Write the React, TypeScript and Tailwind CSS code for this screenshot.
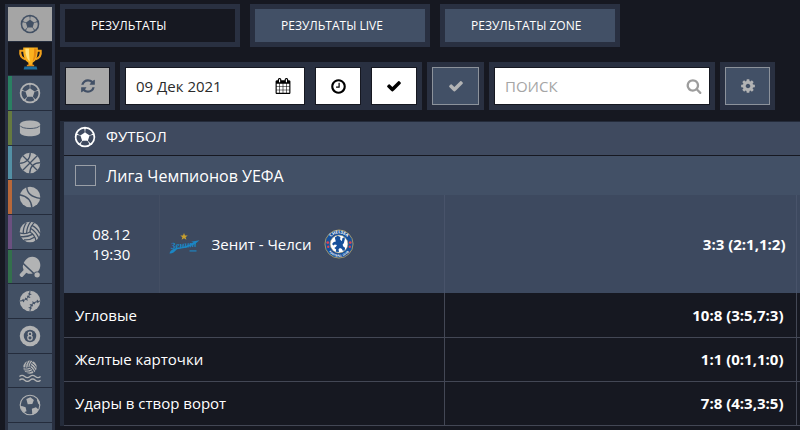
import type { ReactNode } from "react";

const fa = {
  refresh:
    "M1639 1056q0 5-1 7-64 268-268 434.5t-478 166.5q-146 0-282.5-55t-243.5-157l-129 129q-19 19-45 19t-45-19-19-45v-448q0-26 19-45t45-19h448q26 0 45 19t19 45-19 45l-137 137q71 66 161 102t187 36q134 0 250-65t186-179q11-17 53-117 8-23 30-23h192q13 0 22.5 9.5t9.5 22.5zm25-800v448q0 26-19 45t-45 19h-448q-26 0-45-19t-19-45 19-45l138-138q-148-137-349-137-134 0-250 65t-186 179q-11 17-53 117-8 23-30 23h-199q-13 0-22.5-9.5t-9.5-22.5v-7q65-268 270-434.5t480-166.5q146 0 284 55.5t245 156.5l130-129q19-19 45-19t45 19 19 45z",
  calendar:
    "M192 1664h288v-288h-288v288zm352 0h320v-288h-320v288zm-352-352h288v-320h-288v320zm352 0h320v-320h-320v320zm-352-384h288v-288h-288v288zm736 736h320v-288h-320v288zm-384-736h320v-288h-320v288zm768 736h288v-288h-288v288zm-384-352h320v-320h-320v320zm-352-864v-288q0-13-9.5-22.5t-22.5-9.5h-64q-13 0-22.5 9.5t-9.5 22.5v288q0 13 9.5 22.5t22.5 9.5h64q13 0 22.5-9.5t9.5-22.5zm736 864h288v-320h-288v320zm-384-384h320v-288h-320v288zm384 0h288v-288h-288v288zm32-480v-288q0-13-9.5-22.5t-22.5-9.5h-64q-13 0-22.5 9.5t-9.5 22.5v288q0 13 9.5 22.5t22.5 9.5h64q13 0 22.5-9.5t9.5-22.5zm384-64v1280q0 52-38 90t-90 38h-1408q-52 0-90-38t-38-90v-1280q0-52 38-90t90-38h128v-96q0-66 47-113t113-47h64q66 0 113 47t47 113v96h384v-96q0-66 47-113t113-47h64q66 0 113 47t47 113v96h128q52 0 90 38t38 90z",
  clock:
    "M1024 544v448q0 14-9 23t-23 9h-320q-14 0-23-9t-9-23v-64q0-14 9-23t23-9h224v-352q0-14 9-23t23-9h64q14 0 23 9t9 23zm416 352q0-148-73-273t-198-198-273-73-273 73-198 198-73 273 73 273 198 198 273 73 273-73 198-198 73-273zm224 0q0 209-103 385.5t-279.5 279.5-385.5 103-385.5-103-279.5-279.5-103-385.5 103-385.5 279.5-279.5 385.5-103 385.5 103 279.5 279.5 103 385.5z",
  check:
    "M1671 566q0 40-28 68l-724 724-136 136q-28 28-68 28t-68-28l-136-136-362-362q-28-28-28-68t28-68l136-136q28-28 68-28t68 28l294 295 656-657q28-28 68-28t68 28l136 136q28 28 28 68z",
  search:
    "M1216 832q0-185-131.5-316.5t-316.5-131.5-316.5 131.5-131.5 316.5 131.5 316.5 316.5 131.5 316.5-131.5 131.5-316.5zm512 832q0 52-38 90t-90 38q-54 0-90-38l-343-342q-179 124-399 124-143 0-273.5-55.5t-225-150-150-225-55.5-273.5 55.5-273.5 150-225 225-150 273.5-55.5 273.5 55.5 225 150 150 225 55.5 273.5q0 220-124 399l343 343q37 37 37 90z",
  cog: "M1152 896q0-106-75-181t-181-75-181 75-75 181 75 181 181 75 181-75 75-181zm512-109v222q0 12-8 23t-20 13l-185 28q-19 54-39 91 35 50 107 138 10 12 10 25t-9 23q-27 37-99 108t-94 71q-12 0-26-9l-138-108q-44 23-91 38-16 136-29 186-7 28-36 28h-222q-14 0-24.5-8.5t-11.5-21.5l-28-184q-49-16-90-37l-141 107q-10 9-25 9-14 0-25-11-126-114-165-168-7-10-7-23 0-12 8-23 15-21 51-66.5t54-70.5q-27-50-41-99l-183-27q-13-2-21-12.5t-8-23.5v-222q0-12 8-23t19-13l186-28q14-46 39-92-40-57-107-138-10-12-10-24 0-10 9-23 26-36 98.5-107.5t94.5-71.5q13 0 26 10l138 107q44-23 91-38 16-136 29-186 7-28 36-28h222q14 0 24.5 8.5t11.5 21.5l28 184q49 16 90 37l142-107q9-9 24-9 13 0 25 10 129 119 165 170 7 8 7 22 0 12-8 23-15 21-51 66.5t-54 70.5q26 50 41 98l183 28q13 2 21 12.5t8 23.5z",
};

function Icon({ path, className }: { path: string; className: string }) {
  return (
    <svg viewBox="0 0 1792 1792" fill="currentColor" className={className} aria-hidden="true">
      <path d={path} />
    </svg>
  );
}

function Glyph({ children, className = "size-[22px]" }: { children: ReactNode; className?: string }) {
  return (
    <svg viewBox="0 0 24 24" className={className} fill="currentColor" aria-hidden="true">
      {children}
    </svg>
  );
}

function SoccerBall({ cut, className }: { cut: string; className?: string }) {
  return (
    <Glyph className={className}>
      <circle cx="12" cy="12" r="11.2" />
      {[0, 72, 144, 216, 288].map((angle) => (
        <path
          key={angle}
          d="M9.7 16.2h4.6q.6 0 .9.6l1.4 2.5q.2.5-.3.8-4.3 2.4-8.6 0-.5-.3-.3-.8l1.4-2.500q.3-.6.9-.6z"
          fill={cut}
          transform={`rotate(${angle} 12 12)`}
        />
      ))}
    </Glyph>
  );
}

const cut = "#425064";

function VolleyballShape() {
  return (
    <>
      <circle cx="12" cy="12" r="11.2" />
      {[0, 120, 240].map((angle) => (
        <path
          key={angle}
          d="M12 12q0-6 5-10.5M8.3 13.7q0-7 4.5-13.1M4.7 13.9q-.5-6.5 3.3-12"
          fill="none"
          stroke={cut}
          strokeWidth="1.4"
          transform={`rotate(${angle} 12 12)`}
        />
      ))}
    </>
  );
}

const sports = [
  { name: "Все", bar: "border-[#a5a5a5]", bg: "bg-[#a5a5a5] text-[#425064]", icon: <SoccerBall cut="#a5a5a5" className="size-[20px]" /> },
  {
    name: "Турниры",
    bar: "border-[#161821]",
    bg: "bg-[#161821]",
    icon: (
      <Glyph className="size-[25px]">
        <path d="M6 4.5H2.2q-1 6.5 5.3 8.5M18 4.5h3.8q1 6.5-5.3 8.5" fill="none" stroke="#f0a01c" strokeWidth="2" />
        <path d="M5 1.5h14q.6 11.7-5 14.5v2.5h-4V16Q4.4 13.2 5 1.5z" fill="#fbb21e" />
        <path d="M7 2.5h3.5q0 8.5 1 12.5-4.5-3-4.5-12.5z" fill="#ffe07a" />
        <path d="M15.5 2.5h2.500q0 9.500-4 12.500 1.700-5 1.500-12.500z" fill="#e58a12" />
        <path d="M8.5 18h7v1.6h-7z" fill="#e58a12" />
        <path d="M6.2 19.6h11.600l.8 3H5.4z" fill="#1d6c9c" />
      </Glyph>
    ),
  },
  { name: "Футбол", bar: "border-[#2a8062]", bg: "bg-[#425064] text-[#b2b3b4]", icon: <SoccerBall cut={cut} className="size-[22px]" /> },
  {
    name: "Хоккей",
    bar: "border-[#657a40]",
    bg: "bg-[#425064] text-[#b2b3b4]",
    icon: (
      <Glyph>
        <path d="M1 8v8.5c0 6 22 6 22 0V8z" />
        <ellipse cx="12" cy="8" rx="11" ry="4.2" />
        <path d="M1.2 9.4c1.8 4.2 19.8 4.2 21.6 0" fill="none" stroke={cut} strokeWidth="1" />
      </Glyph>
    ),
  },
  {
    name: "Баскетбол",
    bar: "border-[#5390a5]",
    bg: "bg-[#425064] text-[#b2b3b4]",
    icon: (
      <Glyph>
        <circle cx="12" cy="12" r="11.2" />
        <path
          d="M12 .5v23M.5 12h23M4 3.5q8 8.5 0 17M20 3.5q-8 8.5 0 17"
          fill="none"
          stroke={cut}
          strokeWidth="1.4"
          transform="rotate(45 12 12)"
        />
      </Glyph>
    ),
  },
  {
    name: "Теннис",
    bar: "border-[#b8683a]",
    bg: "bg-[#425064] text-[#b2b3b4]",
    icon: (
      <Glyph>
        <circle cx="12" cy="12" r="11.2" />
        <path d="M8.5.5q0 11 15 13M.5 9.5q13 2.5 13.5 14" fill="none" stroke={cut} strokeWidth="1.5" />
      </Glyph>
    ),
  },
  {
    name: "Волейбол",
    bar: "border-[#6b5080]",
    bg: "bg-[#425064] text-[#b2b3b4]",
    icon: (
      <Glyph>
        <VolleyballShape />
      </Glyph>
    ),
  },
  {
    name: "Настольный теннис",
    bar: "border-[#33704c]",
    bg: "bg-[#425064] text-[#b2b3b4]",
    icon: (
      <Glyph>
        <path d="M7 4.5C11-.5 18-.2 21.3 4c3 4.2 2.4 9.500-.8 13q-2.5-.5-4 1.3L5.2 7.6Q5.6 6 7 4.5z" />
        <path d="M4.5 9.2L15 19q-3.5 1.3-7-.8L4 22.5q-1 .8-2 0l-1-1q-.8-1 0-2l4-4.3q-1.6-3-.5-6z" />
        <circle cx="19.8" cy="20.5" r="2.9" />
      </Glyph>
    ),
  },
  {
    name: "Бейсбол",
    bar: "border-[#425064]",
    bg: "bg-[#425064] text-[#b2b3b4]",
    icon: (
      <Glyph>
        <circle cx="12" cy="12" r="11.2" />
        <path d="M12 1Q12 11 1 12M23 12q-11 1-11 11" fill="none" stroke={cut} strokeWidth="1.1" />
        <path
          d="M10 4l3.4 1M8.8 6.5l3.4 1.8M6.7 8.5l2.6 2.7M4.2 9.8l1 3.4M19.8 10.8l1 3.4M14.7 12.8l2.6 2.7M11.8 15.7l3.4 1.8M10.6 19l3.4 1"
          stroke={cut}
          strokeWidth="1.2"
        />
      </Glyph>
    ),
  },
  {
    name: "Бильярд",
    bar: "border-[#425064]",
    bg: "bg-[#425064] text-[#b2b3b4]",
    icon: (
      <Glyph>
        <circle cx="12" cy="12" r="11.2" />
        <circle cx="12" cy="12" r="6.8" fill={cut} />
        <circle cx="12" cy="9.7" r="2" fill="none" stroke="currentColor" strokeWidth="1.4" />
        <circle cx="12" cy="14" r="2.4" fill="none" stroke="currentColor" strokeWidth="1.4" />
      </Glyph>
    ),
  },
  {
    name: "Водное поло",
    bar: "border-[#425064]",
    bg: "bg-[#425064] text-[#b2b3b4]",
    icon: (
      <Glyph>
        <g transform="translate(4.2 0) scale(.65)">
          <VolleyballShape />
        </g>
        <path
          d="M.5 18q2.800-2.600 5.700 0t5.800 0 5.800 0 5.700 0M.5 22q2.800-2.600 5.700 0t5.800 0 5.800 0 5.700 0"
          fill="none"
          stroke="currentColor"
          strokeWidth="1.4"
        />
      </Glyph>
    ),
  },
  {
    name: "Футзал",
    bar: "border-[#425064]",
    bg: "bg-[#425064] text-[#b2b3b4]",
    icon: (
      <Glyph>
        <circle cx="12" cy="12" r="10.7" fill="none" stroke="currentColor" strokeWidth="1.2" />
        <path d="M8 5.500l4.500-2 3.700 3-1.700 4.300-5 .4zM3 13l4.200 1.500 1 4.200-3 1.300Q2 17 1.500 13.500zM14 16l4.500-1.500 2.700 2.500-2.400 4-4.300 1zM20 5q3 3 3 7.500l-2-2-1.500-4z" />
      </Glyph>
    ),
  },
];

const stats = [
  { label: "Угловые", score: "10:8 (3:5,7:3)" },
  { label: "Желтые карточки", score: "1:1 (0:1,1:0)" },
  { label: "Удары в створ ворот", score: "7:8 (4:3,3:5)" },
];

const tabs = [
  { label: "РЕЗУЛЬТАТЫ", style: "bg-[#161821]" },
  { label: "РЕЗУЛЬТАТЫ LIVE", style: "bg-[#425066]" },
  { label: "РЕЗУЛЬТАТЫ ZONE", style: "bg-[#425066]" },
];

function ZenitLogo() {
  return (
    <svg viewBox="0 0 32 22" className="h-[22px] w-8 shrink-0 overflow-visible" role="img" aria-label="Зенит">
      <path d="M16 0l1 2.5 2.7.1-2.1 1.6.8 2.6L16 5.3l-2.4 1.5.8-2.6-2.1-1.6 2.7-.1z" fill="#c9a02e" />
      <text
        x="3"
        y="15"
        fontFamily="Liberation Serif, serif"
        fontStyle="italic"
        fontWeight="700"
        fontSize="9"
        fill="#1b86c4"
        transform="rotate(-5 14 14)"
      >
        Зенит
      </text>
      <path d="M23 8.8l8.5-1.5Q25 14.5 9 16.3q-4 4.700-7.500 4.200Q2 16.8 8 15q11-1 17.500-5.700z" fill="#1b86c4" />
      <path d="M21.5 17h7v1.8h-7z" fill="#28709f" />
    </svg>
  );
}

function ChelseaLogo() {
  return (
    <svg viewBox="0 0 32 32" className="size-[30px] shrink-0" role="img" aria-label="Челси">
      <circle cx="16" cy="16" r="15" fill="#17509a" stroke="#a99a68" strokeWidth="1" />
      <circle cx="16" cy="16" r="9.5" fill="#fff" stroke="#a99a68" strokeWidth=".6" />
      <defs>
        <path id="crest-top" d="M4.7 16a11.3 11.3 0 0 1 22.6 0" />
        <path id="crest-bottom" d="M2.5 16a13.5 13.5 0 0 0 27 0" />
      </defs>
      <g fill="#fff" fontFamily="Open Sans, sans-serif" fontWeight="700" textAnchor="middle">
        <text fontSize="4.5">
          <textPath href="#crest-top" startOffset="50%">CHELSEA</textPath>
        </text>
        <text fontSize="3">
          <textPath href="#crest-bottom" startOffset="50%">FOOTBALL CLUB</textPath>
        </text>
      </g>
      <g fill="#d94552">
        <circle cx="4" cy="14.5" r="1.5" />
        <circle cx="4.5" cy="19" r="1.3" />
        <circle cx="28" cy="14.5" r="1.5" />
        <circle cx="27.5" cy="19" r="1.3" />
      </g>
      <path
        d="M11.5 9l3-1.800 3 1.300-.3 2.800 1.800 1.700.7-3.500 2.300-.8.2 2.300-1 4-1.400 1.800 1 2.200 1.700 1-.5 3.200-2.300-.4-.5-1.600-2.200-1-1.500 1.500.5 2.700-3.500-.2.5-2.400-2-1.600 1.800-1.200 1-2-2.300-.5-1.500 1.200-1.400-1.700 1.800-2.200 2.200-.5z"
        fill="#17509a"
      />
    </svg>
  );
}

export default function App() {
  return (
    <div className="flex h-screen gap-[5px] overflow-hidden bg-[#161821] pl-[5px] font-['Open_Sans',sans-serif] text-white">
      <nav aria-label="Виды спорта" className="mt-1 flex w-[50px] shrink-0 flex-col border-x-[3px] border-t-[3px] border-[#293041] bg-[#293041]">
        <ul className="flex flex-1 flex-col">
          {sports.map((sport) => (
            <li key={sport.name} className="flex min-h-[34px] flex-1 border-b border-[#242c3c]">
              <a
                href="#"
                aria-label={sport.name}
                className={`flex flex-1 items-center justify-center border-l-4 pr-1 ${sport.bar} ${sport.bg}`}
              >
                {sport.icon}
              </a>
            </li>
          ))}
        </ul>
        <div className="h-[7px] bg-[#425064]" />
      </nav>

      <main className="min-w-0 flex-1 pt-1">
        <div className="flex gap-[10px]">
          {tabs.map((tab) => (
            <button
              key={tab.label}
              type="button"
              className={`h-[43px] w-[180px] border-5 border-[#293041] pl-[26px] text-left text-xs ${tab.style}`}
            >
              {tab.label}
            </button>
          ))}
        </div>

        <div className="mt-[15px] flex gap-[5px]">
          <div className="bg-[#293041] p-[5px]">
            <button type="button" aria-label="Обновить" className="flex h-[38px] w-[45px] items-center justify-center border border-[#161821] bg-[#a9a9a9] text-[#425066]">
              <Icon path={fa.refresh} className="size-4" />
            </button>
          </div>
          <div className="flex gap-[10px] bg-[#293041] p-[5px]">
            <label className="flex h-[38px] w-[180px] items-center border border-[#161821] bg-white pr-[13px] pl-[10px] text-black">
              <input aria-label="Дата" defaultValue="09 Дек 2021" className="min-w-0 flex-1 text-[15px] text-[#2b2b2b] outline-none" />
              <Icon path={fa.calendar} className="size-4" />
            </label>
            <button type="button" aria-label="Время" className="flex h-[38px] w-[46px] items-center justify-center border border-[#161821] bg-white text-black">
              <Icon path={fa.clock} className="size-[17px]" />
            </button>
            <button type="button" aria-label="Применить" className="flex h-[38px] w-[46px] items-center justify-center border border-[#161821] bg-white text-black">
              <Icon path={fa.check} className="size-4" />
            </button>
          </div>
          <div className="bg-[#293041] p-[5px]">
            <button type="button" aria-label="Выбрать все" className="flex h-[38px] w-[47px] items-center justify-center border border-[#8c929b] bg-[#425066] text-[#b2b3b4]">
              <Icon path={fa.check} className="size-4" />
            </button>
          </div>
          <div className="bg-[#293041] p-[5px]">
            <label className="flex h-[38px] w-[216px] items-center border border-[#161821] bg-white pr-[7px] pl-[10px] text-[#9d9d9d]">
              <input aria-label="Поиск" placeholder="ПОИСК" className="min-w-0 flex-1 text-[15px] text-black outline-none placeholder:text-[#a5a5a5]" />
              <Icon path={fa.search} className="size-4" />
            </label>
          </div>
          <div className="bg-[#293041] p-[5px]">
            <button type="button" aria-label="Настройки" className="flex h-[38px] w-[45px] items-center justify-center border border-[#8c929b] bg-[#425066] text-[#b2b3b4]">
              <Icon path={fa.cog} className="size-4" />
            </button>
          </div>
        </div>

        <section className="mt-[11px] border-t border-l-4 border-[#242b3a]">
          <h2 className="flex h-[34px] items-center gap-[10px] border-b border-[#161821] bg-[#3f4a5f] pb-1 pl-[10px] text-[15px]">
            <SoccerBall cut="#3f4a5f" className="size-[22px]" />
            ФУТБОЛ
          </h2>
          <label className="flex h-[39px] items-center gap-[10px] bg-[#425066] pl-[11px] text-base">
            <input type="checkbox" className="size-[21px] appearance-none border border-[#9a9fa7]" />
            Лига Чемпионов УЕФА
          </label>
          <table className="w-full table-fixed border-collapse">
            <colgroup>
              <col className="w-[95px]" />
              <col className="w-[285px]" />
              <col />
              <col className="w-1" />
            </colgroup>
            <tbody>
              <tr className="h-[98px] bg-[#3d495f] text-[15px]">
                <td className="border-r border-[#434e63] text-center leading-5">
                  08.12
                  <br />
                  19:30
                </td>
                <td className="border-r border-[#48536a] pl-2">
                  <div className="flex items-center gap-3">
                    <ZenitLogo />
                    <span>Зенит - Челси</span>
                    <ChelseaLogo />
                  </div>
                </td>
                <td className="border-r border-[#48536a] pr-[10px] text-right font-bold">3:3 (2:1,1:2)</td>
                <td />
              </tr>
              {stats.map((stat) => (
                <tr key={stat.label} className="h-[44px] border-b border-[#434755] text-[15px]">
                  <td colSpan={2} className="border-r border-[#434755] pl-[11px]">{stat.label}</td>
                  <td className="border-r border-[#434755] pr-3 text-right font-bold">{stat.score}</td>
                  <td />
                </tr>
              ))}
            </tbody>
          </table>
        </section>
      </main>
    </div>
  );
}
